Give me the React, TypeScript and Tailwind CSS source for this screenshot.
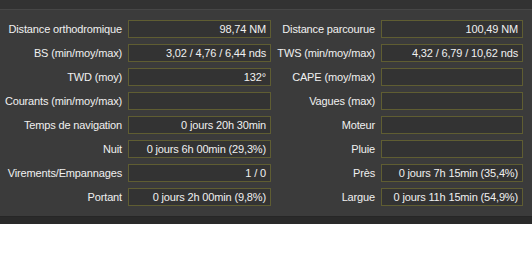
const rows: [string, string, string, string][] = [
  ["Distance orthodromique", "98,74 NM", "Distance parcourue", "100,49 NM"],
  ["BS (min/moy/max)", "3,02 / 4,76 / 6,44 nds", "TWS (min/moy/max)", "4,32 / 6,79 / 10,62 nds"],
  ["TWD (moy)", "132°", "CAPE (moy/max)", ""],
  ["Courants (min/moy/max)", "", "Vagues (max)", ""],
  ["Temps de navigation", "0 jours 20h 30min", "Moteur", ""],
  ["Nuit", "0 jours 6h 00min (29,3%)", "Pluie", ""],
  ["Virements/Empannages", "1 / 0", "Près", "0 jours 7h 15min (35,4%)"],
  ["Portant", "0 jours 2h 00min (9,8%)", "Largue", "0 jours 11h 15min (54,9%)"],
];

function Field({ label, value, labelW, boxW }: { label: string; value: string; labelW: string; boxW: string }) {
  return (
    <>
      <div className={`${labelW} pr-[6px] text-right whitespace-nowrap`}>{label}</div>
      <div className={`${boxW} h-[18px] border border-[#5f5d32] bg-[#333333] px-[4px] text-right leading-[16px] whitespace-nowrap`}>
        {value}
      </div>
    </>
  );
}

export default function App() {
  return (
    <div className="w-[532px] h-[268px] bg-white font-['Liberation_Sans',Arial,sans-serif] text-[11px] tracking-[-0.15px] text-[#f0f0f0]">
      {/* top strip */}
      <div className="h-[10px] bg-[#323232] border-b border-[#464646]" />

      {/* stats panel */}
      <div className="bg-[#3b3b3b] pt-[10px] pb-[10px] flex flex-col gap-[6px] border-b border-[#262626]">
        {rows.map((r) => (
          <div key={r[0]} className="flex items-center">
            <Field label={r[0]} value={r[1]} labelW="w-[128px]" boxW="w-[143px]" />
            <Field label={r[2]} value={r[3]} labelW="w-[110px]" boxW="w-[142px]" />
          </div>
        ))}
      </div>

      {/* bottom strip */}
      <div className="h-[7px] bg-[#2a2a2a]" />
    </div>
  );
}
